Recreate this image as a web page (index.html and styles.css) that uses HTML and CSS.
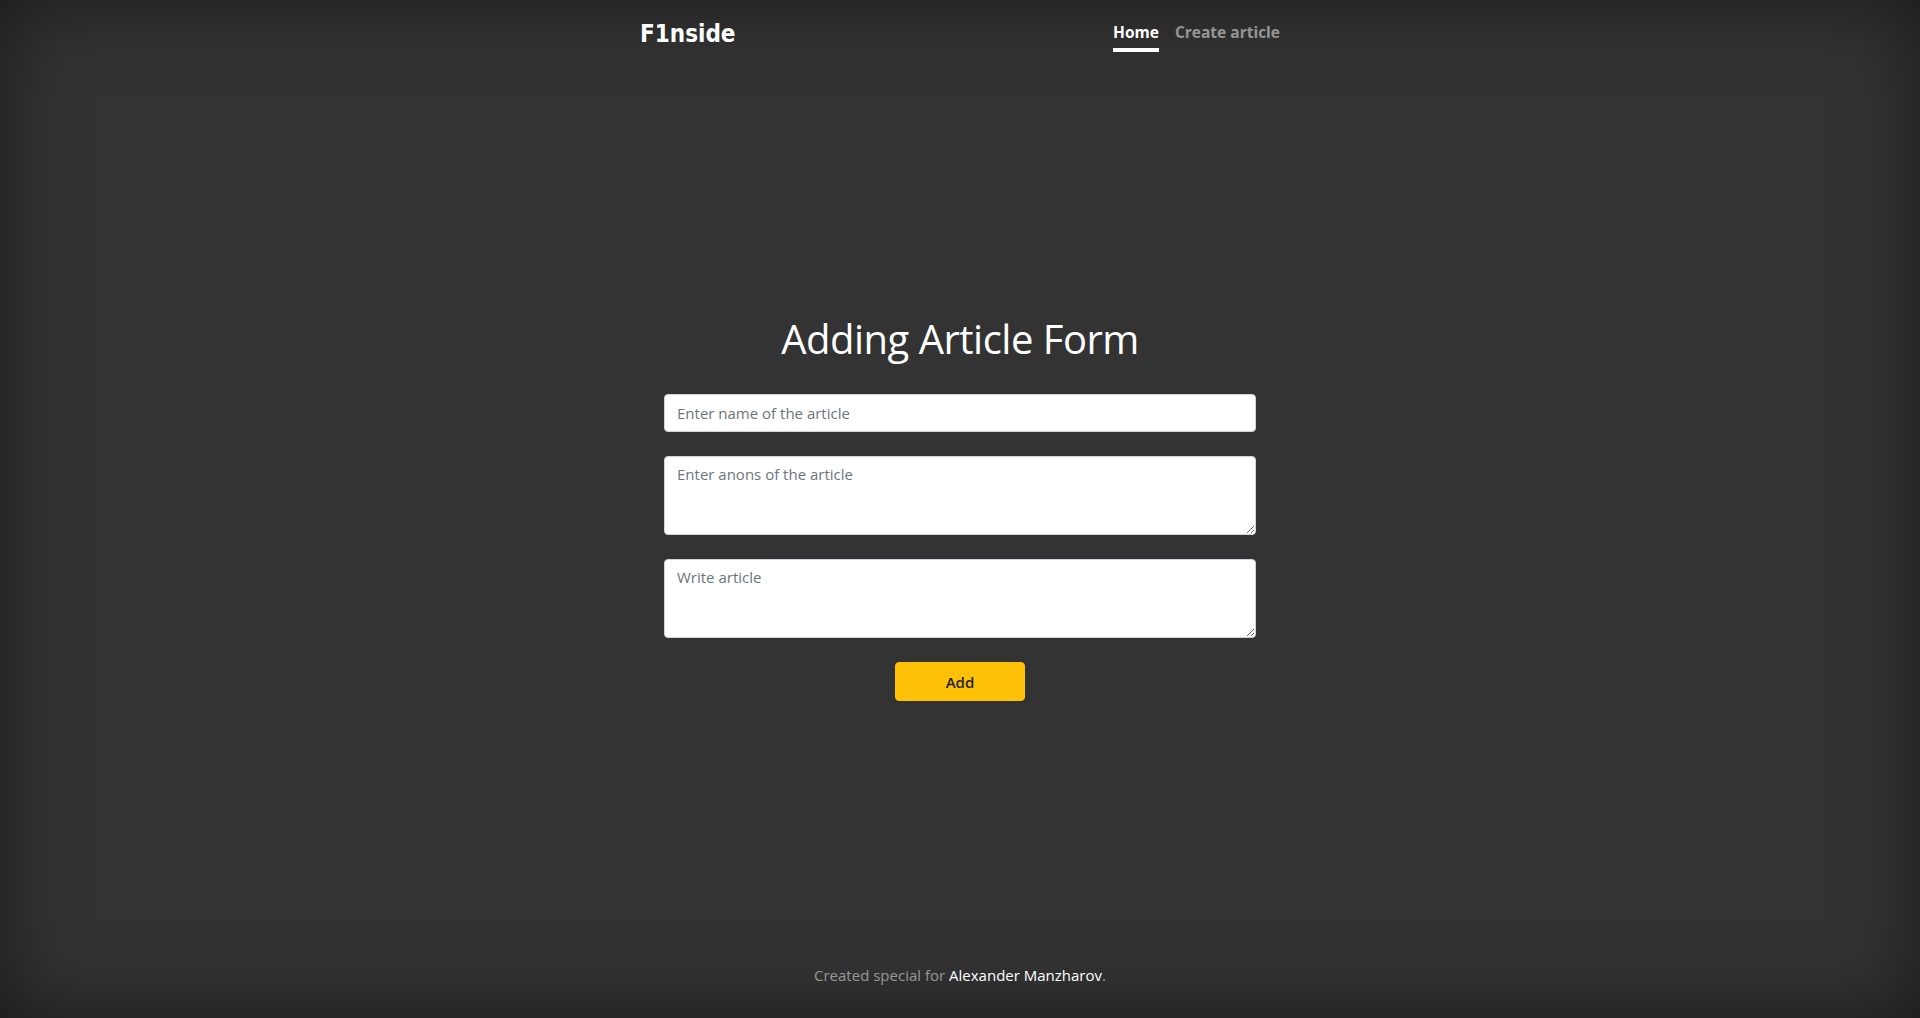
FILE: index.html
```html
<!DOCTYPE html>
<html lang="en">
<head>
<meta charset="utf-8">
<title>F1nside</title>
<link rel="stylesheet" href="styles.css">
</head>
<body>
<div class="cover">
  <header class="masthead">
    <h3 class="brand">F1nside</h3>
    <nav class="nav">
      <a class="nav-link active" href="#">Home</a>
      <a class="nav-link" href="#">Create article</a>
    </nav>
  </header>
  <main class="main">
    <h1 class="heading">Adding Article Form</h1>
    <form class="form">
      <input class="field" type="text" placeholder="Enter name of the article">
      <textarea class="field area" placeholder="Enter anons of the article"></textarea>
      <textarea class="field area" placeholder="Write article"></textarea>
      <button class="btn" type="button">Add</button>
    </form>
  </main>
  <footer class="footer">
    <p>Created special for <a href="#">Alexander Manzharov</a>.</p>
  </footer>
</div>
</body>
</html>
```

FILE: styles.css
```css
html, body {
  height: 100%;
}
body {
  margin: 0;
  background: #333;
  color: #fff;
  font-family: "Open Sans", "Noto Sans", sans-serif;
  font-size: 16px;
  line-height: 1.5;
  box-shadow: inset 0 0 5rem rgba(0, 0, 0, .5);
}
.cover {
  box-sizing: border-box;
  max-width: 672px;
  height: 100%;
  margin: 0 auto;
  padding: 16px;
  display: flex;
  flex-direction: column;
}
.masthead {
  display: flex;
  justify-content: space-between;
  align-items: flex-start;
}
.brand {
  margin: 0;
  font-family: "DejaVu Sans Condensed", "DejaVu Sans", sans-serif;
  font-weight: 700;
  font-size: 24px;
  line-height: 1.2;
  padding-top: 4px;
}
.nav {
  display: flex;
}
.nav-link {
  padding: 4px 0;
  margin-left: 16px;
  font-weight: 700;
  color: rgba(255, 255, 255, .5);
  text-decoration: none;
  border-bottom: 4px solid transparent;
  font-size: 15.5px;
  line-height: 24px;
}
.nav-link.active {
  color: #fff;
  border-bottom-color: #fff;
}
.main {
  flex: 1;
  display: flex;
  flex-direction: column;
  justify-content: center;
  align-items: center;
}
.heading {
  margin: 1px 0 31px;
  font-size: 40px;
  font-weight: 400;
  line-height: 1.2;
  font-family: "Open Sans", sans-serif;
  letter-spacing: -0.5px;
}
.form {
  width: 592px;
  display: flex;
  flex-direction: column;
  align-items: center;
}
.field {
  box-sizing: border-box;
  width: 100%;
  height: 38px;
  padding: 6px 12px;
  margin: 0 0 24px;
  font-family: "Open Sans", sans-serif;
  font-size: 15px;
  line-height: 1.5;
  color: #495057;
  background: #fff;
  border: 1px solid #ced4da;
  border-radius: 4px;
  display: block;
}
.field::placeholder {
  color: #6c757d;
}
.area {
  height: 79px;
  resize: vertical;
}
.btn {
  width: 130px;
  height: 39px;
  border: 1px solid #ffc107;
  background: #ffc107;
  color: #212529;
  border-radius: 4px;
  font-family: "Open Sans", sans-serif;
  font-weight: 600;
  font-size: 15px;
}
.footer {
  text-align: center;
  color: rgba(255, 255, 255, .5);
  font-size: 15px;
}
.footer p {
  margin: 0 0 16px;
}
.footer a {
  color: #fff;
  text-decoration: none;
}
```
